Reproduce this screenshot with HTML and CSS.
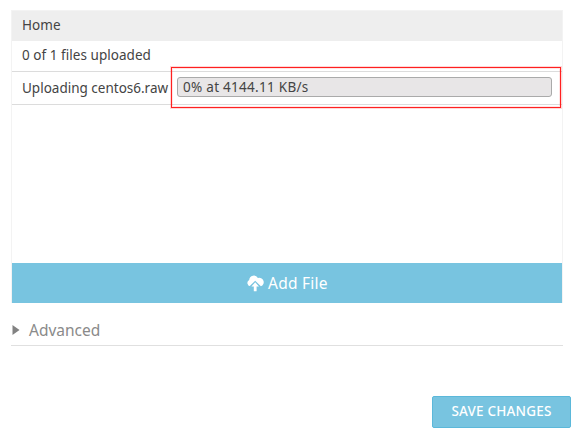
FILE: index.html
```html
<!DOCTYPE html>
<html lang="en">
<head>
<meta charset="utf-8">
<title>File upload</title>
<link rel="stylesheet" href="styles.css">
</head>
<body>
<main class="page">
  <section class="uploader">
    <header class="row home"><span>Home</span></header>
    <div class="row status"><span>0 of 1 files uploaded</span></div>
    <div class="row file">
      <span class="filename">Uploading centos6.raw</span>
      <div class="progress"><span>0% at 4144.11 KB/s</span></div>
      <div class="highlight"></div>
    </div>
    <div class="space"></div>
    <button class="add">
      <svg class="cloud" viewBox="0 0 17 17" width="17" height="17">
        <path d="M3.8 11.3A3.4 3.4 0 0 1 2.2 4.9 4.6 4.6 0 0 1 10.9 3.1 4.1 4.1 0 0 1 13.9 11.2L8.2 5.7 2.5 11.2z" fill="#fff"/>
        <path d="M8.2 7.3 12 11.6H9.6v4.6H6.8v-4.6H4.4z" fill="#fff"/>
      </svg>
      <span>Add File</span>
    </button>
  </section>
  <section class="advanced">
    <svg class="arrow" viewBox="0 0 8 10" width="8" height="10"><path d="M0.5 0 7.5 5 0.5 10z" fill="#828282"/></svg>
    <span>Advanced</span>
  </section>
  <footer class="actions"><button class="save"><span>SAVE CHANGES</span></button></footer>
</main>
</body>
</html>
```
FILE: styles.css
```css
* { box-sizing: border-box; }
body {
  margin: 0;
  background: #fff;
  color: #444;
  font-family: "Noto Sans", "Open Sans", sans-serif;
  font-size: 13.5px;
  letter-spacing: .04px;
}
button { font-family: inherit; padding: 0; }
.page { width: 585px; height: 438px; padding: 10px 14px 0 11px; overflow: hidden; }
.uploader {
  display: flex;
  flex-direction: column;
  width: 552px;
  height: 293px;
  border: 1px solid #f3f3f3;
  border-bottom: 0;
}
.row { display: flex; align-items: center; padding-left: 10px; white-space: nowrap; }
.home { height: 30px; background: #eee; padding-bottom: 2px; }
.status { height: 31px; border-bottom: 1px solid #dcdcdc; padding-bottom: 2px; }
.file { position: relative; height: 33px; border-bottom: 1px solid #dcdcdc; }
.filename { width: 155px; letter-spacing: 0; }
.progress {
  display: flex;
  align-items: center;
  width: 375px;
  height: 20px;
  margin-bottom: 2px;
  padding-left: 5px;
  border: 1px solid #aaa;
  border-radius: 3px;
  background: #e8e6e7;
  letter-spacing: .28px;
}
.highlight {
  position: absolute;
  left: 159px;
  top: -5px;
  width: 390px;
  height: 41px;
  border: 1px solid #ff2020;
  box-shadow: 0 0 0 1px rgba(255, 32, 32, .18), inset 0 0 0 1px rgba(255, 32, 32, .12);
}
.space { flex: 1; }
.add {
  display: flex;
  align-items: center;
  height: 40px;
  padding-left: 235px;
  gap: 4px;
  border: 0;
  background: #78c4e0;
  color: #fff;
  font-size: 15.5px;
  letter-spacing: .25px;
}
.add span { padding-bottom: 1px; }
.advanced {
  display: flex;
  align-items: center;
  width: 552px;
  height: 43px;
  padding: 12px 0 0 1px;
  gap: 9px;
  border-bottom: 1px solid #e0e0e0;
  color: #8a8a8a;
  font-size: 15.5px;
  letter-spacing: 0;
}
.actions { display: flex; justify-content: flex-end; padding-top: 50px; }
.save {
  width: 139px;
  height: 32px;
  padding-bottom: 2px;
  border: 1px solid #5bb8da;
  border-radius: 2px;
  background: #78c4e0;
  color: #fff;
  font-size: 13.5px;
  font-weight: 500;
  letter-spacing: .2px;
}
```
